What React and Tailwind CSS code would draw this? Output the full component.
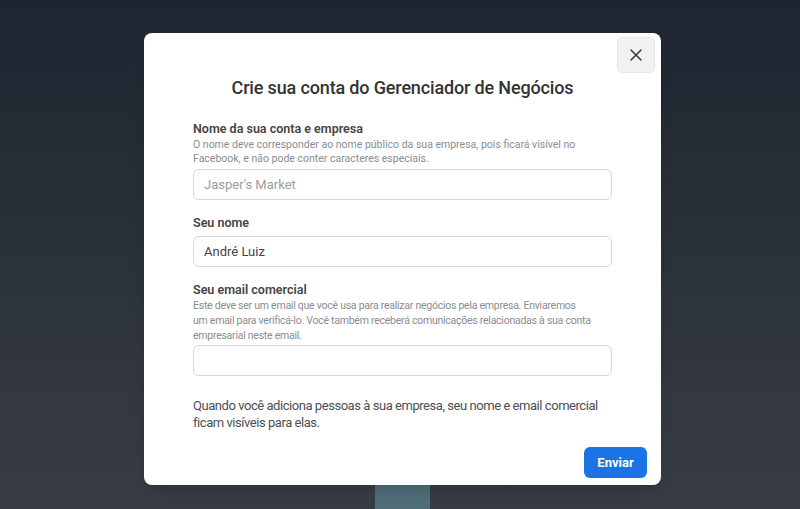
export default function App() {
  return (
    <div className="flex h-[509px] w-full flex-col items-center overflow-hidden bg-gradient-to-b from-[#1f2530] to-[#383d45] pl-[5px] pt-[33px] font-['Roboto',sans-serif]">
      <div className="relative w-[517px] rounded-lg bg-white px-[49px] pb-[7px] pt-[43px] shadow-lg">
        <button className="absolute right-[6px] top-[4px] flex h-[36px] w-[38px] items-center justify-center rounded-md border border-[#e4e6eb] bg-[#f2f2f2]">
          <svg width="14" height="14" viewBox="0 0 14 14" fill="none" stroke="#3a3b3c" strokeWidth="1.6" strokeLinecap="round">
            <path d="M2 2l10 10M12 2L2 12" />
          </svg>
        </button>
        <h1 className="text-center text-[18px] font-medium leading-6 tracking-[-0.15px] text-[#333]">
          Crie sua conta do Gerenciador de Negócios
        </h1>

        <div className="mt-5">
          <div className="pt-px text-[12.5px] font-semibold leading-4 text-[#444]">Nome da sua conta e empresa</div>
          <p className="mt-px text-[10.5px] leading-[14px] text-[#8a8d91]">
            O nome deve corresponder ao nome público da sua empresa, pois ficará visível no Facebook, e não pode conter caracteres especiais.
          </p>
          <input
            className="mt-[3px] h-[31px] w-full rounded-md border border-[#d5d8dc] px-[10px] text-[13px] text-[#444] outline-none placeholder:text-[#9a9da1]"
            placeholder="Jasper's Market"
          />
        </div>

        <div className="mt-[14px]">
          <div className="pt-px text-[12.5px] font-semibold leading-4 text-[#444]">Seu nome</div>
          <input
            className="mt-[5px] h-[31px] w-full rounded-md border border-[#d5d8dc] px-[10px] text-[13px] text-[#444] outline-none"
            defaultValue="André Luiz"
          />
        </div>

        <div className="mt-[14px]">
          <div className="pt-px text-[12.5px] font-semibold leading-4 text-[#444]">Seu email comercial</div>
          <p className="text-[10.5px] leading-[15px] tracking-[-0.25px] text-[#8a8d91]">
            Este deve ser um email que você usa para realizar negócios pela empresa. Enviaremos
            <br />
            um email para verificá-lo. Você também receberá comunicações relacionadas à sua conta empresarial neste email.
          </p>
          <input className="mt-[2px] h-[31px] w-full rounded-md border border-[#d5d8dc] px-[10px] text-[13px] text-[#444] outline-none" />
        </div>

        <p className="mt-[21px] text-[13px] leading-[17px] tracking-[-0.45px] text-[#4b4f56]">
          Quando você adiciona pessoas à sua empresa, seu nome e email comercial ficam visíveis para elas.
        </p>

        <div className="-mr-[35px] mt-[16px] flex justify-end">
          <button className="h-[31px] w-[63px] rounded-md bg-[#1b74e4] text-[13px] font-bold text-white">Enviar</button>
        </div>
      </div>
      <div className="h-[30px] w-[55px] bg-[#4f6e78]" />
    </div>
  );
}
